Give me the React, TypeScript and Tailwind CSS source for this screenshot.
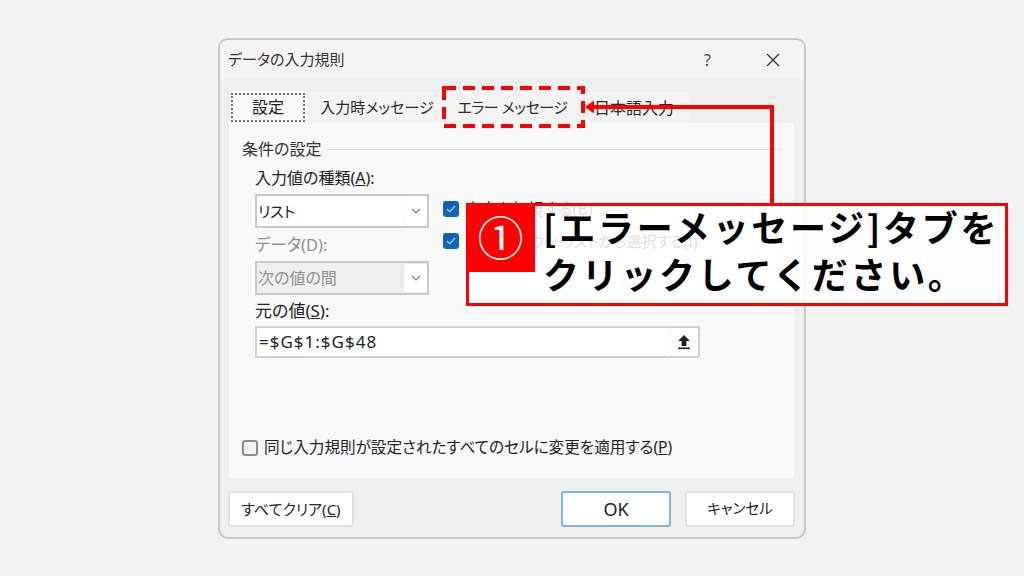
const uiFont = "font-['Noto_Sans','Noto_Sans_CJK_JP',sans-serif]";

function Chevron() {
  return (
    <svg width="10" height="6" viewBox="0 0 10 6" fill="none" stroke="#777" strokeWidth="1.1">
      <path d="M1 1l4 4 4-4" />
    </svg>
  );
}

function Tick() {
  return (
    <svg width="10" height="8" viewBox="0 0 10 8" fill="none" stroke="#b9d3ef" strokeWidth="1.1">
      <path d="M1 4l2.6 2.6L9 1" />
    </svg>
  );
}

function Combo({ label, disabled }: { label: string; disabled?: boolean }) {
  return (
    <div
      className={`flex h-[34px] w-[174px] items-center border-2 border-[#c9c9c9] ${
        disabled ? "bg-[#efefef] text-[16px] text-[#8f8f8f]" : "bg-white text-[15px] text-[#222]"
      }`}
    >
      <span className="flex-1 pl-[1px]">{label}</span>
      <span className="flex h-[28px] w-[23px] items-center justify-center rounded-[2px] bg-white shadow-[0_0_1px_#bbb]">
        <Chevron />
      </span>
    </div>
  );
}

function CheckRow({ label, size }: { label: string; size: string }) {
  return (
    <div className="flex h-4 items-center gap-[6px]">
      <span className="flex h-4 w-4 items-center justify-center rounded-[3px] bg-[#0f63bd]">
        <Tick />
      </span>
      <span className={`text-[#222] ${size}`}>{label}</span>
    </div>
  );
}

function Tab({ label, className }: { label: string; className: string }) {
  return (
    <div className={`flex h-[31px] items-center justify-center bg-[#f3f3f3] text-[#2a2a2a] ${className}`}>
      {label}
    </div>
  );
}

function Footer({ label, wide, primary }: { label: React.ReactNode; wide?: boolean; primary?: boolean }) {
  return (
    <button
      className={`flex h-[36px] items-center justify-center rounded-[3px] border-2 bg-white text-[#222] ${
        wide ? "w-[126px]" : "w-[110px]"
      } ${primary ? "border-[#7db4e3]" : "border-[#e2e2e2]"}`}
    >
      {label}
    </button>
  );
}

export default function App() {
  return (
    <div className={`relative flex h-[576px] w-[1024px] justify-center overflow-hidden bg-[#f2f2f2] pt-[38px] ${uiFont}`}>
      {/* Dialog */}
      <div className="flex h-[501px] w-[588px] flex-col overflow-hidden rounded-[10px] border-2 border-[#c6c6c6] bg-[#efefef] [font-feature-settings:'palt']">
        <div className="flex h-[39px] shrink-0 items-center justify-between bg-[#f3f3f3] pl-[8px] pr-[24px]">
          <span className="text-[15px] text-[#333]">データの入力規則</span>
          <div className="flex items-center gap-[55px]">
            <span className="text-[16px] text-[#444]">?</span>
            <svg width="14" height="14" viewBox="0 0 14 14" fill="none" stroke="#333" strokeWidth="1.3">
              <path d="M1 1l12 12M13 1L1 13" />
            </svg>
          </div>
        </div>

        <div className="flex flex-1 flex-col px-[9px]">
          {/* Tabs */}
          <div className="mt-[12px] flex h-[32px] items-end">
            <div className="flex h-[32px] w-[78px] items-center bg-[#f9f9f9] pl-[2px]">
              <div className="flex h-[29px] w-[74px] items-center justify-center border-2 border-dotted border-[#707070] text-[16px] text-[#222]">
                設定
              </div>
            </div>
            <Tab label="入力時メッセージ" className="w-[140px] text-[15px]" />
            <Tab label="エラー メッセージ" className="w-[140px] pr-[9px] text-[15px] tracking-[-0.5px]" />
            <Tab label="日本語入力" className="w-[102px] pr-[8px] text-[16px]" />
          </div>

          {/* Panel */}
          <div className="h-[355px] w-[565px] bg-[#f9f9f9] pl-[13px] pr-[12px] pt-[15px]">
            <div className="flex items-center gap-[6px]">
              <span className="text-[16px] leading-[22px] text-[#333]">条件の設定</span>
              <span className="h-px flex-1 bg-[#e3e3e3]" />
            </div>

            <div className="ml-[13px] mt-[7px] flex gap-[14px]">
              <div className="flex w-[174px] flex-col">
                <span className="text-[16px] leading-[22px] text-[#222]">
                  入力値の種類(<u>A</u>):
                </span>
                <div className="mt-[5px]">
                  <Combo label="リスト" />
                </div>
                <span className="mt-[6px] text-[16.5px] leading-[22px] text-[#8f8f8f]">データ(D):</span>
                <div className="mt-[5px]">
                  <Combo label="次の値の間" disabled />
                </div>
              </div>
              <div className="flex flex-col gap-[16px] pt-[34px]">
                <CheckRow label="空白を無視する(B)" size="text-[16px]" />
                <CheckRow label="ドロップダウン リストから選択する(I)" size="text-[15px]" />
              </div>
            </div>

            <div className="ml-[13px] mt-[5px] text-[17px] leading-[22px] text-[#222]">
              元の値(<u>S</u>):
            </div>
            <div className="ml-[13px] mt-[4px] flex h-[32px] w-[445px] items-center justify-between border-2 border-[#d2d2d2] bg-white pl-[2px]">
              <span className="-mt-[1px] text-[17px] tracking-[1px] text-[#222]">=$G$1:$G$48</span>
              <span className="flex h-[28px] w-[28px] items-center justify-center rounded-[2px] bg-white shadow-[0_0_1px_#aaa]">
                <svg width="14" height="16" viewBox="0 0 14 16" fill="#222">
                  <path d="M7 1l6 6H9.4v5H4.6V7H1z" />
                  <rect x="1" y="13.5" width="12" height="1.6" />
                </svg>
              </span>
            </div>

            <div className="mt-[78px] flex h-[24px] items-center gap-[6px]">
              <span className="h-4 w-4 rounded-[3px] border-2 border-[#8a8a8a] bg-[#f4f4f4]" />
              <span className="text-[15.6px] text-[#222]">
                同じ入力規則が設定されたすべてのセルに変更を適用する(<u>P</u>)
              </span>
            </div>
          </div>

          {/* Buttons */}
          <div className="mt-[13px] flex items-center -ml-[1px]">
            <Footer
              wide
              label={
                <span className="text-[15px]">
                  すべてクリア(<u>C</u>)
                </span>
              }
            />
            <div className="ml-auto flex gap-[14px]">
              <Footer label={<span className="text-[18px]">OK</span>} primary />
              <Footer label={<span className="text-[14.5px]">キャンセル</span>} />
            </div>
          </div>
        </div>
      </div>

      {/* Annotation: dashed box around the tab */}
      <svg className="absolute left-[442px] top-[86px]" width="143" height="42" viewBox="0 0 143 42" fill="none">
        <rect x="2" y="2" width="139" height="38" stroke="#ff0000" strokeWidth="4" strokeDasharray="12 7" />
      </svg>

      {/* Annotation: arrow */}
      <svg className="absolute left-[580px] top-[95px]" width="200" height="112" viewBox="0 0 200 112" fill="none">
        <path d="M192 110V12H12" stroke="#ff0000" strokeWidth="4" />
        <path d="M5 12l9-6.5v13z" fill="#ff0000" />
      </svg>

      {/* Annotation: callout */}
      <div className="absolute left-[466px] top-[203px] flex h-[103px] w-[542px] border-[3px] border-[#ff0000] bg-white/85">
        <div className="absolute -left-[3px] -top-[3px] flex h-[69px] w-[69px] items-center justify-center bg-[#ff0000] text-[46px] text-white">
          ①
        </div>
        <div className="ml-[74px] -mt-[3px] text-[36px] font-bold leading-[47px] tracking-[2.7px] text-black font-['Noto_Sans_CJK_JP',sans-serif]">
          [エラーメッセージ]タブを
          <br />
          クリックしてください。
        </div>
      </div>
    </div>
  );
}
